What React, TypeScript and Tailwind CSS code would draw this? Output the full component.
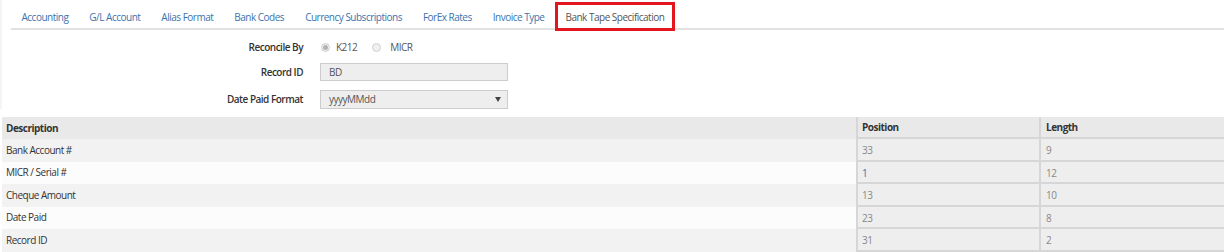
import React from "react";

const tabs = [
  "Accounting",
  "G/L Account",
  "Alias Format",
  "Bank Codes",
  "Currency Subscriptions",
  "ForEx Rates",
  "Invoice Type",
  "Bank Tape Specification",
];

const rows = [
  { d: "Bank Account #", p: "33", l: "9" },
  { d: "MICR / Serial #", p: "1", l: "12", link: true },
  { d: "Cheque Amount", p: "13", l: "10" },
  { d: "Date Paid", p: "23", l: "8" },
  { d: "Record ID", p: "31", l: "2" },
];

function Radio({ checked }: { checked?: boolean }) {
  return (
    <span className="w-[9px] h-[9px] rounded-full border border-[#cfcfcf] bg-[#f0f0f0] flex items-center justify-center">
      {checked && <span className="w-[5px] h-[5px] rounded-full bg-[#b3b3b3]" />}
    </span>
  );
}

export default function App() {
  return (
    <div
      className="w-[1224px] h-[252px] bg-white text-[10px] tracking-[-0.5px] text-[#333] overflow-hidden flex flex-col"
      style={{ fontFamily: '"Open Sans", "Liberation Sans", sans-serif' }}
    >
      <div className="flex">
        <div className="w-[2px] bg-[#f3f3f8]" />
        <div className="flex-1 flex flex-col">
          {/* tabs */}
          <div className="flex pl-[9px]">
            <div className="flex-1 flex border-b-2 border-[#e2e2e2] h-[30px]">
              {tabs.map((t, i) => {
                const active = i === tabs.length - 1;
                return (
                  <div
                    key={t}
                    className={
                      "flex items-center px-[10.5px] " +
                      (active
                        ? "text-[#555] shadow-[inset_0_0_0_3px_#e3151e] mt-[2px] h-[29px] pt-[2px]"
                        : "h-[30px] pt-[4px] text-[#3b73ae]")
                    }
                  >
                    {t}
                  </div>
                );
              })}
            </div>
          </div>
          {/* form */}
          <div className="flex flex-col pt-[9px]">
            <div className="flex items-center h-[16px]">
              <div className="w-[301px] text-right font-semibold text-[#333]">Reconcile By</div>
              <div className="flex items-center ml-[18px] text-[#555]">
                <Radio checked />
                <span className="ml-[6px]">K212</span>
                <span className="ml-[15px]">
                  <Radio />
                </span>
                <span className="ml-[9px]">MICR</span>
              </div>
            </div>
            <div className="flex items-center mt-[8px] h-[18px]">
              <div className="w-[301px] text-right font-semibold">Record ID</div>
              <div className="ml-[17px] w-[188px] h-[18px] bg-[#eeeeee] border border-[#cccccc] flex items-center pl-[8px] text-[#555]">
                BD
              </div>
            </div>
            <div className="flex items-center mt-[9px] h-[19px]">
              <div className="w-[301px] text-right font-semibold">Date Paid Format</div>
              <div className="ml-[17px] w-[188px] h-[19px] bg-[#eeeeee] border border-[#cccccc] flex items-center justify-between pl-[8px] pr-[6px] text-[#555]">
                <span>yyyyMMdd</span>
                <svg width="6" height="5" viewBox="0 0 6 5">
                  <path d="M0 0 H6 L3 5 Z" fill="#444" />
                </svg>
              </div>
            </div>
          </div>
        </div>
      </div>
      {/* table */}
      <div className="mt-[8px] ml-[2px] flex flex-col">
        <div className="flex h-[22px] bg-[#e9e9e9] font-bold text-[#333]">
          <div className="w-[854px] flex items-center pl-[4px]">Description</div>
          <div className="w-[183px] flex items-center pl-[4px] border-l-2 border-[#d6d6d6] border-b-2">
            Position
          </div>
          <div className="flex-1 flex items-center pl-[5px] border-l-2 border-[#d6d6d6] border-b-2">
            Length
          </div>
        </div>
        {rows.map((r, i) => (
          <div
            key={r.d}
            className={"flex h-[22.5px] " + (i % 2 === 0 ? "bg-[#f2f2f2]" : "bg-[#fcfcfc]")}
          >
            <div className="w-[854px] flex items-center pl-[4px] text-[#333]">{r.d}</div>
            <div
              className={
                "w-[183px] flex items-center pl-[4px] pt-[3px] bg-[#eeeeee] border-l-2 border-b-2 border-[#d6d6d6] " +
                (r.link ? "text-[#3b73ae]" : "text-[#888]")
              }
            >
              {r.p}
            </div>
            <div className="flex-1 flex items-center pl-[5px] pt-[3px] bg-[#eeeeee] border-l-2 border-b-2 border-[#d6d6d6] text-[#888]">
              {r.l}
            </div>
          </div>
        ))}
      </div>
    </div>
  );
}
